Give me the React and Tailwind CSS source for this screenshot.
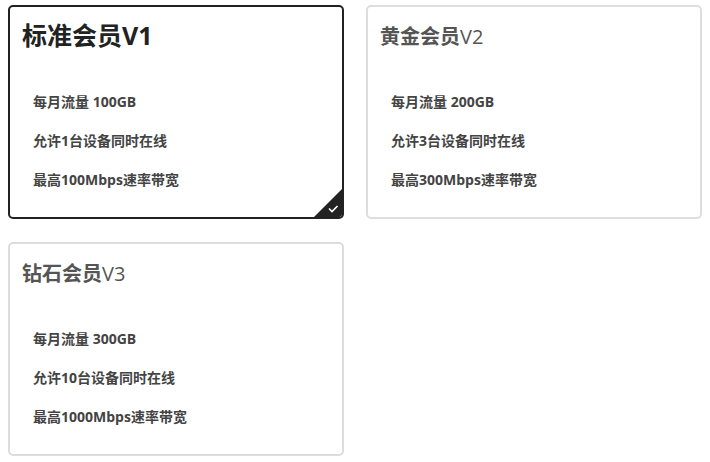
import React from "react";

const plans = [
  { name: "标准会员", v: "V1", traffic: "100GB", devices: "1", speed: "100", selected: true },
  { name: "黄金会员", v: "V2", traffic: "200GB", devices: "3", speed: "300", selected: false },
  { name: "钻石会员", v: "V3", traffic: "300GB", devices: "10", speed: "1000", selected: false },
];

function Card({ p }) {
  return (
    <div
      className={
        "relative h-[214px] rounded-[5px] border-2 bg-white overflow-hidden " +
        (p.selected ? "border-[#222222]" : "border-[#dddddd]")
      }
    >
      {p.selected ? (
        <div className="pl-[12px] pt-[12px] h-[33px] text-[25px] leading-[33px] font-bold text-[#222222] box-content">
          {p.name}
          {p.v}
        </div>
      ) : (
        <div className="pl-[12px] pt-[17px] h-[28px] text-[20px] leading-[26px] text-[#555555] box-content">
          <span className="font-bold">{p.name}</span>
          <span>{p.v}</span>
        </div>
      )}
      <div
        className={
          "flex flex-col gap-[21px] pl-[23px] text-[14px] leading-[18px] font-bold text-[#444444] " +
          (p.selected ? "pt-[41px]" : "pt-[41px]")
        }
      >
        <div>每月流量 {p.traffic}</div>
        <div>允许{p.devices}台设备同时在线</div>
        <div>最高{p.speed}Mbps速率带宽</div>
      </div>
      {p.selected && (
        <div className="absolute right-0 bottom-0 w-[28px] h-[28px]">
          <svg width="28" height="28" viewBox="0 0 28 28">
            <polygon points="28,0 28,28 0,28" fill="#222222" />
            <path d="M15 19.5 L18 22.5 L23.5 17" stroke="#ffffff" strokeWidth="1.6" fill="none" />
          </svg>
        </div>
      )}
    </div>
  );
}

export default function App() {
  return (
    <div
      className="w-[710px] h-[462px] bg-white pl-[8px] pr-[8px] pt-[5px]"
      style={{ fontFamily: '"Open Sans", "Noto Sans CJK SC", sans-serif' }}
    >
      <div className="grid grid-cols-[336px_336px] gap-x-[22px] gap-y-[23px]">
        {plans.map((p) => (
          <Card key={p.v} p={p} />
        ))}
      </div>
    </div>
  );
}
